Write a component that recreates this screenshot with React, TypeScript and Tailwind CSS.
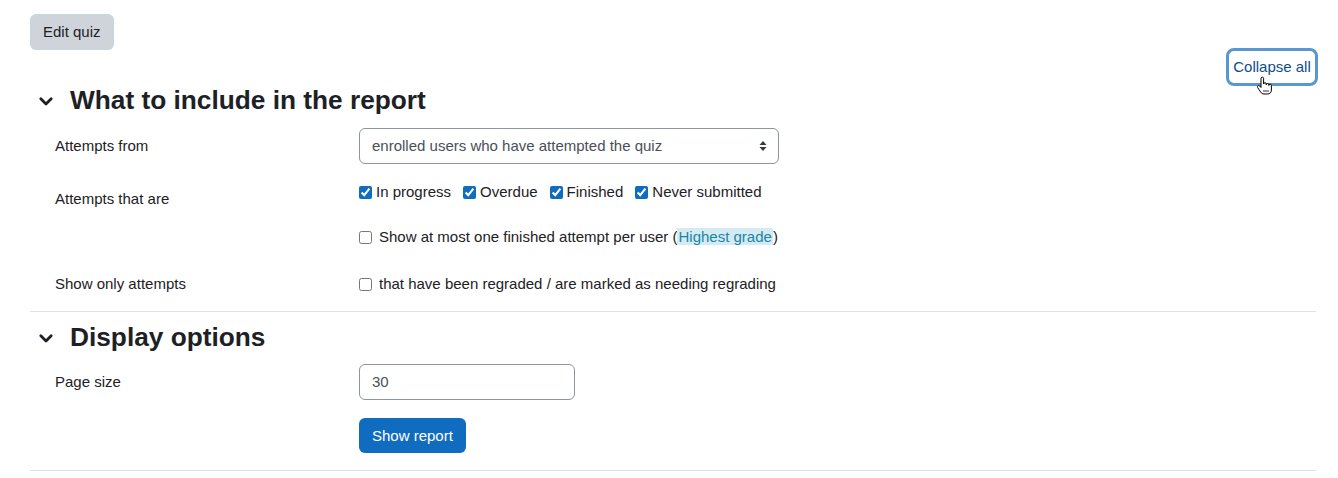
import React from "react";

function Chevron() {
  return (
    <svg width="16" height="16" viewBox="0 0 16 16" className="shrink-0">
      <path d="M2.8 5.8 L8 11 L13.2 5.8" fill="none" stroke="#1d2125" strokeWidth="2.8" strokeLinecap="round" strokeLinejoin="round" />
    </svg>
  );
}

function Check({ checked, label }: { checked?: boolean; label: React.ReactNode }) {
  return (
    <label className="flex items-center h-[22px]">
      <input type="checkbox" defaultChecked={checked} className="w-[13px] h-[13px] m-0 mr-[4px] accent-[#0f6cbf]" />
      <span>{label}</span>
    </label>
  );
}

function HandCursor() {
  return (
    <svg width="18" height="20" viewBox="0 0 18 20" className="absolute left-[1256px] top-[76px]">
      <path
        d="M5 2.5 a1.3 1.3 0 0 1 2.6 0 V8 a1.3 1.3 0 0 1 2.6 0 V8.8 a1.3 1.3 0 0 1 2.6 0 V9.5 a1.3 1.3 0 0 1 2.6 0 V14 c0 2.5 -1.5 4 -4 4 H8 c-1.6 0 -2.6 -0.8 -3.4 -2 L1.6 11.5 a1.3 1.3 0 0 1 2 -1.6 L5 11.5 Z"
        fill="#fff"
        stroke="#000"
        strokeWidth="1"
        strokeLinejoin="round"
      />
      <path d="M8 14 V16 M10 14 V16 M12 14 V16" stroke="#000" strokeWidth="0.8" />
    </svg>
  );
}

export default function App() {
  return (
    <div
      className="relative w-[1338px] h-[478px] bg-white text-[#1d2125] text-[15px] leading-[22px] pl-[30px] pr-[22px] pt-[14px] overflow-hidden"
      style={{ fontFamily: '"Liberation Sans", Arial, sans-serif' }}
    >
      <div>
        <button className="h-[36px] px-[13px] rounded-[6px] bg-[#ced4da] text-[#1d2125] text-[15px]">Edit quiz</button>
      </div>

      <div className="flex justify-end mt-[-2px]">
        <div className="h-[38px] w-[92px] mr-[-2px] rounded-[8px] border-[3px] border-[#5897d2] flex items-center justify-center text-[#0f4d8a]">
          Collapse all
        </div>
      </div>

      <div className="flex items-center h-[31px] mt-[-1px]">
        <div className="w-[40px] pl-[8px]">
          <Chevron />
        </div>
        <h3 className="text-[26.25px] leading-[31px] font-bold">What to include in the report</h3>
      </div>

      <div className="grid grid-cols-[329px_1fr] mt-[12px]">
        <div className="pl-[25px] h-[36px] flex items-center">Attempts from</div>
        <div className="w-[420px] h-[36px] border border-[#8f959e] rounded-[6px] flex items-center justify-between pl-[12px] pr-[11px] text-[#495057]">
          <span>enrolled users who have attempted the quiz</span>
          <svg width="8" height="12" viewBox="0 0 8 12">
            <path d="M4 1 L7.5 5 H0.5 Z M4 11 L7.5 7 H0.5 Z" fill="#343a40" />
          </svg>
        </div>

        <div className="pl-[25px] pt-[7px] mt-[17px]">Attempts that are</div>
        <div className="mt-[17px]">
          <div className="flex items-center gap-[12px]">
            <Check checked label="In progress" />
            <Check checked label="Overdue" />
            <Check checked label="Finished" />
            <Check checked label="Never submitted" />
          </div>
          <label className="flex items-center h-[22px] mt-[23px]">
            <input type="checkbox" className="w-[13px] h-[13px] m-0 mr-[7px] accent-[#0f6cbf]" />
            <span>
              Show at most one finished attempt per user (
              <span className="bg-[#d4ebf3] text-[#1a86a6] px-[1px]">Highest grade</span>)
            </span>
          </label>
        </div>

        <div className="pl-[25px] h-[22px] mt-[25px] flex items-center">Show only attempts</div>
        <label className="flex items-center h-[22px] mt-[25px]">
          <input type="checkbox" className="w-[13px] h-[13px] m-0 mr-[7px] accent-[#0f6cbf]" />
          <span>that have been regraded / are marked as needing regrading</span>
        </label>
      </div>

      <div className="border-t border-[#dee2e6] mt-[16px]" />

      <div className="flex items-center h-[31px] mt-[10px]">
        <div className="w-[40px] pl-[8px]">
          <Chevron />
        </div>
        <h3 className="text-[26.25px] leading-[31px] font-bold">Display options</h3>
      </div>

      <div className="grid grid-cols-[329px_1fr] mt-[11px]">
        <div className="pl-[25px] h-[36px] flex items-center">Page size</div>
        <div className="w-[216px] h-[36px] border border-[#8f959e] rounded-[6px] flex items-center pl-[12px] text-[#495057]">30</div>
        <div />
        <div className="mt-[18px]">
          <button className="h-[35px] px-[13px] rounded-[6px] bg-[#0f6cbf] text-white text-[15px]">Show report</button>
        </div>
      </div>

      <div className="border-t border-[#dee2e6] mt-[17px]" />

      <HandCursor />
    </div>
  );
}
